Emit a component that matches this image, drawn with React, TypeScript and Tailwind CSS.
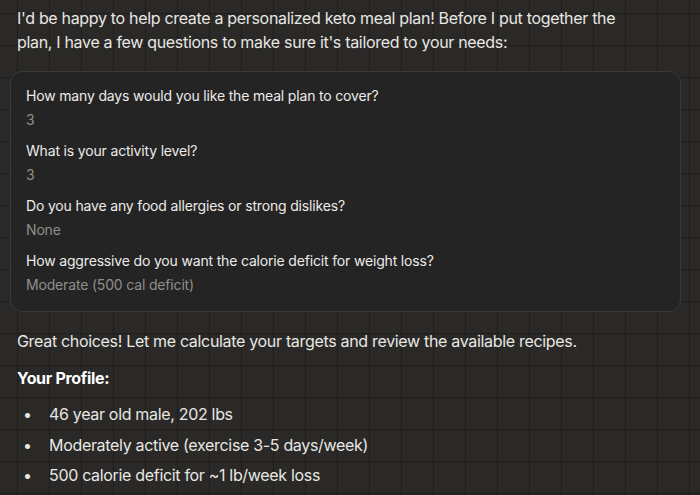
export default function App() {
  const qs = [
    { q: "How many days would you like the meal plan to cover?", a: "3" },
    { q: "What is your activity level?", a: "3" },
    { q: "Do you have any food allergies or strong dislikes?", a: "None" },
    { q: "How aggressive do you want the calorie deficit for weight loss?", a: "Moderate (500 cal deficit)" },
  ];
  const bullets = [
    "46 year old male, 202 lbs",
    "Moderately active (exercise 3-5 days/week)",
    "500 calorie deficit for ~1 lb/week loss",
  ];
  return (
    <div
      className="w-[700px] h-[495px] overflow-hidden bg-[#2a2927] bg-[image:linear-gradient(to_right,#1f1e1d_1px,transparent_1px),linear-gradient(to_bottom,#1f1e1d_1px,transparent_1px)] bg-[size:32px_32px] bg-[position:17px_13px] text-[#e8e7e3]"
      style={{ fontFamily: "Inter, 'Noto Sans', sans-serif" }}
    >
      <div className="pl-[17px] pr-[19px] pt-[6px]">
        <p className="text-[16px] leading-[24px] tracking-[-0.32px]">
          I'd be happy to help create a personalized keto meal plan! Before I put together the
          <br />
          plan, I have a few questions to make sure it's tailored to your needs:
        </p>
      </div>
      <div className="ml-[10px] mt-[17px] w-[671px] h-[241px] rounded-[12px] border border-[#3a3937] bg-[#242424] px-[15px] pt-[12px] flex flex-col gap-[7px]">
        {qs.map((x) => (
          <div key={x.q} className="flex flex-col tracking-[-0.17px]">
            <div className="text-[14px] leading-[24px] text-[#ecebe8]">{x.q}</div>
            <div className="text-[14px] leading-[24px] text-[#8f8e8a]">{x.a}</div>
          </div>
        ))}
      </div>
      <div className="pl-[17px] pt-[17px] tracking-[-0.32px]">
        <p className="text-[16px] leading-[24px]">
          Great choices! Let me calculate your targets and review the available recipes.
        </p>
        <p className="mt-[13px] text-[16px] leading-[24px] font-bold text-white">Your Profile:</p>
        <ul className="mt-[12px] flex flex-col gap-[6.5px]">
          {bullets.map((b) => (
            <li key={b} className="flex items-center text-[16px] leading-[24px]">
              <span className="w-[32px] pl-[6px] text-[16px]">•</span>
              <span>{b}</span>
            </li>
          ))}
        </ul>
      </div>
    </div>
  );
}
